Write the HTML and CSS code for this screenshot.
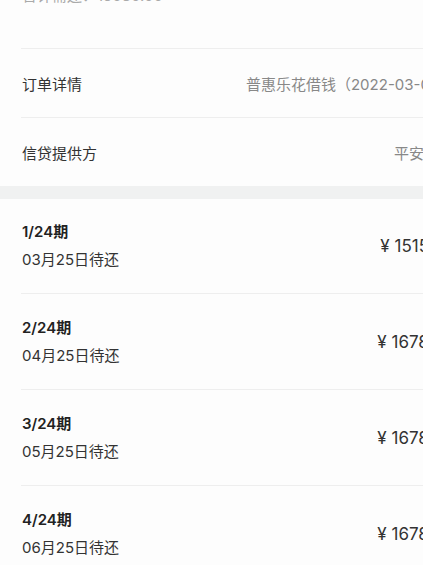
FILE: index.html
```html
<!DOCTYPE html>
<html lang="zh-CN">

<head>
  <meta charset="UTF-8">
  <meta name="viewport" content="width=device-width, initial-scale=1.0">
  <title>还款计划</title>
  <link rel="stylesheet" href="styles.css">
</head>

<body>
  <div class="page">
    <div class="summary">
      <span class="summary-text">合计需还：15030.00</span>
    </div>

    <div class="info">
      <div class="info-row">
        <span class="label">订单详情</span>
        <span class="value">普惠乐花借钱（2022-03-05）</span>
      </div>
      <div class="info-row">
        <span class="label">信贷提供方</span>
        <span class="value">平安银行</span>
      </div>
    </div>

    <div class="band"></div>

    <div class="plan">
      <div class="plan-row">
        <div class="plan-left">
          <span class="term">1/24期</span>
          <span class="due">03月25日待还</span>
        </div>
        <span class="amount">¥ 1515.38</span>
      </div>
      <div class="plan-row">
        <div class="plan-left">
          <span class="term">2/24期</span>
          <span class="due">04月25日待还</span>
        </div>
        <span class="amount">¥ 1678.56</span>
      </div>
      <div class="plan-row">
        <div class="plan-left">
          <span class="term">3/24期</span>
          <span class="due">05月25日待还</span>
        </div>
        <span class="amount">¥ 1678.56</span>
      </div>
      <div class="plan-row">
        <div class="plan-left">
          <span class="term">4/24期</span>
          <span class="due">06月25日待还</span>
        </div>
        <span class="amount">¥ 1678.56</span>
      </div>
    </div>
  </div>
</body>

</html>
```

FILE: styles.css
```css
html,
body {
  margin: 0;
  overflow: hidden;
  background-color: #fdfdfd;
}
body {
  font-family: Inter, "Noto Sans CJK SC", sans-serif;
  color: #333;
}
.page {
  width: 476px;
}
.summary {
  display: flow-root;
  height: 49px;
  margin-left: 21px;
  padding-left: 1px;
  border-bottom: 1px solid #eeeeee;
  box-sizing: border-box;
}
.summary-text {
  display: block;
  margin-top: -14px;
  line-height: 20px;
  font-size: 15px;
  color: #aaa;
}
.info-row {
  display: flex;
  justify-content: space-between;
  align-items: center;
  height: 69px;
  margin-left: 21px;
  padding: 0 22px 0 1px;
  border-bottom: 1px solid #eeeeee;
  box-sizing: border-box;
  font-size: 15px;
  white-space: nowrap;
}
.info-row:last-child {
  height: 68px;
  border-bottom: none;
}
.label {
  color: #333;
}
.value {
  color: #888;
}
.band {
  height: 13px;
  background-color: #f0f1f1;
}
.plan-row {
  display: flex;
  justify-content: space-between;
  align-items: center;
  height: 96px;
  margin-left: 21px;
  padding: 0 22px 0 1px;
  border-bottom: 1px solid #eeeeee;
  box-sizing: border-box;
  white-space: nowrap;
}
.plan-row:first-child {
  height: 95px;
}
.plan-left {
  display: flex;
  flex-direction: column;
  gap: 6px;
}
.term {
  font-size: 15px;
  line-height: 22px;
  font-weight: 600;
  color: #222;
}
.due {
  font-size: 15px;
  line-height: 22px;
  color: #333;
}
.amount {
  font-size: 17px;
  color: #333;
}
```
